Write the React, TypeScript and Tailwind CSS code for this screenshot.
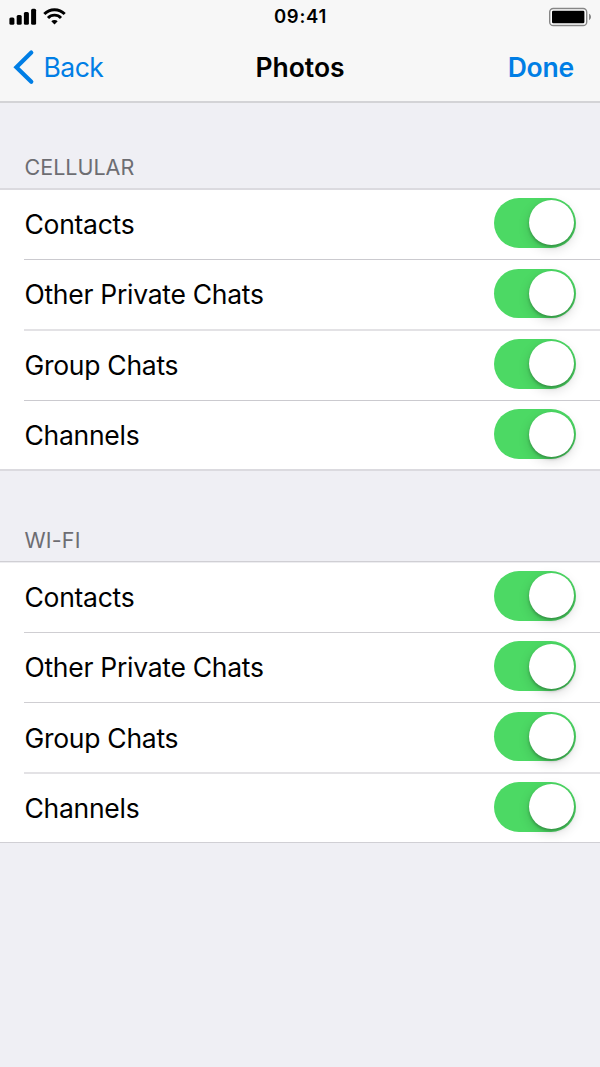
type SectionProps = {
  title: string;
  titleClass: string;
  listClass: string;
  rows: { label: string; className: string }[];
};

// separators are hairlines, some of them fall between two pixel rows
const cellularRows = [
  { label: "Contacts", className: "h-[70px] pt-[8px] border-b border-[#cbcacf]" },
  { label: "Other Private Chats", className: "h-[71px] pt-[8.6px] border-b-2 border-[#e3e2e5]" },
  { label: "Group Chats", className: "h-[70px] pt-[8px] border-b border-[#cbcacf]" },
  { label: "Channels", className: "h-[68px] pt-[8.3px]" },
];

const wifiRows = [
  { label: "Contacts", className: "h-[71px] pt-[9px] border-b border-[#cfced2]" },
  { label: "Other Private Chats", className: "h-[70px] pt-[8.4px] border-b border-[#cfced2]" },
  { label: "Group Chats", className: "h-[71px] pt-[8.8px] border-b-2 border-[#e3e2e5]" },
  { label: "Channels", className: "h-[68px] pt-[8px]" },
];

const Toggle = () => {
  return (
    <div className="flex h-[49.7px] w-[81.7px] shrink-0 items-center justify-end rounded-full bg-[#4cd964] pr-[2px]">
      <div className="size-[45.2px] rounded-full bg-white shadow-[0_4px_12px_rgba(0,0,0,0.15),0_2px_3px_rgba(0,0,0,0.25)]" />
    </div>
  );
};

const StatusBar = () => {
  return (
    <div className="flex h-[33px] items-center justify-between pl-[9px] pr-[8px]">
      <div className="flex w-[120px] items-center">
        <svg width="58" height="18" viewBox="0 0 58 18" fill="#000">
          <rect x="0.4" y="9.4" width="5" height="7.3" rx="1.5" />
          <rect x="7.7" y="7" width="5" height="9.7" rx="1.5" />
          <rect x="14.9" y="4" width="5" height="12.7" rx="1.5" />
          <rect x="22.1" y="0.7" width="5" height="16" rx="1.5" />
          <g fill="none" stroke="#000" strokeWidth="2.9">
            <path d="M35.3 6.1a14.2 14.2 0 0 1 20.4 0" />
            <path d="M39 9.9a9 9 0 0 1 13 0" />
          </g>
          <path d="M45.5 16.4l-3.2-3.2a4.6 4.6 0 0 1 6.4 0z" />
        </svg>
      </div>
      <span className="text-[18.5px] font-semibold tracking-[0.75px]">09:41</span>
      <div className="flex w-[120px] justify-end">
        <svg width="44" height="20" viewBox="0 0 44 20">
          <rect x="1.7" y="1.5" width="37" height="17" rx="3.6" fill="#fff" stroke="#868686" strokeWidth="1.4" />
          <rect x="4" y="3.8" width="32.4" height="12.4" rx="1.2" fill="#000" />
          <path d="M41 6.8v6.4c2.7-1.2 2.7-5.2 0-6.4z" fill="#868686" />
        </svg>
      </div>
    </div>
  );
};

const NavBar = () => {
  return (
    <div className="flex h-[68px] items-center justify-between pl-[13px] pr-[26px] text-[26.5px] text-[#007ee5]">
      <div className="flex w-[120px] items-center">
        <svg
          width="22"
          height="36"
          viewBox="0 0 22 36"
          fill="none"
          stroke="currentColor"
          strokeWidth="4.2"
          strokeLinecap="round"
        >
          <path d="M18.3 3.6L3.4 18.2l14.9 14.6" />
        </svg>
        <span className="ml-[8.5px] pt-[2px] tracking-[-0.5px]">Back</span>
      </div>
      <span className="pt-[2px] font-semibold text-black">Photos</span>
      <span className="w-[107px] pt-[2px] text-right font-semibold tracking-[-0.2px]">Done</span>
    </div>
  );
};

const Section = ({ title, titleClass, listClass, rows }: SectionProps) => {
  return (
    <section className="pb-0">
      <h2 className={titleClass}>{title}</h2>
      <div className={listClass}>
        {rows.map((row) => (
          <div key={row.label} className={row.className}>
            <div className="flex items-center justify-between pr-[24px]">
              <span className="pl-[0.5px] pt-[2px] text-[26.5px] leading-[40px] tracking-[-0.28px]">{row.label}</span>
              <Toggle />
            </div>
          </div>
        ))}
      </div>
    </section>
  );
};

export default function App() {
  return (
    <div className="h-[1067px] w-[600px] overflow-hidden bg-[#efeff4] font-['Inter',sans-serif] text-black">
      <header className="h-[103px] border-b-2 border-[#d3d3d6] bg-[#f7f7f7]">
        <StatusBar />
        <NavBar />
      </header>
      <Section
        title="CELLULAR"
        titleClass="h-[85px] pl-[24.5px] pt-[48px] text-[21.5px] leading-[32px] text-[#6d6d72]"
        listClass="border-y-2 border-[#dbdadf] bg-white pl-[24px]"
        rows={cellularRows}
      />
      <Section
        title="WI-FI"
        titleClass="h-[90px] pl-[24.5px] pt-[53px] text-[21.5px] leading-[32px] tracking-[0.15px] text-[#6d6d72]"
        listClass="border-y border-[#d0cfd4] bg-white pl-[24px] shadow-[inset_0_1px_0_#ededf0]"
        rows={wifiRows}
      />
    </div>
  );
}
